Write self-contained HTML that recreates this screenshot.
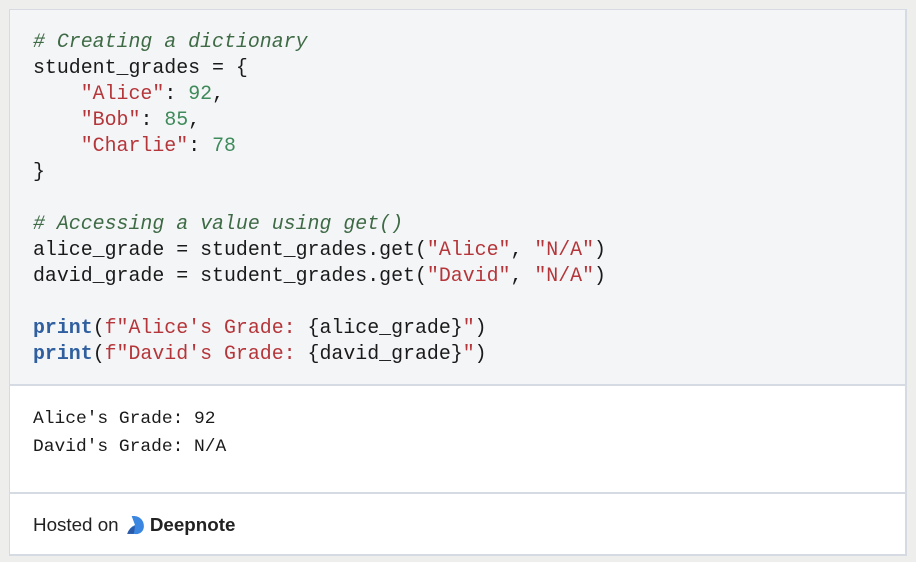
<!DOCTYPE html>
<html><head><style>
html,body{margin:0;padding:0;}
body{width:916px;height:562px;background:#eeefed;position:relative;overflow:hidden;}
.card{position:absolute;left:9px;top:9px;width:895px;height:544px;background:#fff;border:1px solid #d6dbe3;border-right-width:2px;border-bottom-width:2px;}
.code{position:absolute;left:0;top:0;width:895px;height:374px;background:#f4f5f7;border-bottom:2px solid #d6dbe3;}
pre{margin:0;font-family:"Liberation Mono",monospace;}
.code pre{position:absolute;left:23px;top:19px;font-size:19.9px;line-height:26px;color:#1a1a1a;}
.c{color:#3e6a45;font-style:italic}.s{color:#b5363a}.n{color:#3d8a5a}.k{color:#2f5f9f;font-weight:bold}
.out pre{position:absolute;left:23px;top:395px;font-size:17.9px;line-height:28px;color:#1a1a1a;}
.foot{position:absolute;left:0;top:482px;width:895px;border-top:2px solid #d6dbe3;height:60px;}
.foot div{position:absolute;left:23px;top:20px;font-family:"Liberation Sans",sans-serif;font-size:18.8px;color:#222;display:flex;align-items:center;}
</style></head><body>
<div class="card">
<div class="code"><pre><span class="c"># Creating a dictionary</span>
student_grades = {
    <span class="s">"Alice"</span>: <span class="n">92</span>,
    <span class="s">"Bob"</span>: <span class="n">85</span>,
    <span class="s">"Charlie"</span>: <span class="n">78</span>
}

<span class="c"># Accessing a value using get()</span>
alice_grade = student_grades.get(<span class="s">"Alice"</span>, <span class="s">"N/A"</span>)
david_grade = student_grades.get(<span class="s">"David"</span>, <span class="s">"N/A"</span>)

<span class="k">print</span>(<span class="s">f"Alice's Grade: </span>{alice_grade}<span class="s">"</span>)
<span class="k">print</span>(<span class="s">f"David's Grade: </span>{david_grade}<span class="s">"</span>)</pre></div>
<div class="out"><pre>Alice's Grade: 92
David's Grade: N/A</pre></div>
<div class="foot"><div>Hosted on&nbsp;<svg width="20" height="20" viewBox="0 0 18 18" style="margin:0 5px 0 1px"><path d="M6 1 C12 0 17 4 17 10 C17 15 13 18 8 17 L2 17 Q4 11 9 9 Z" fill="#3a86e0"/><path d="M2 17 Q4 11 9 10 L8 17 Z" fill="#2a5aa8"/></svg><b>Deepnote</b></div></div>
</div>
</body></html>
